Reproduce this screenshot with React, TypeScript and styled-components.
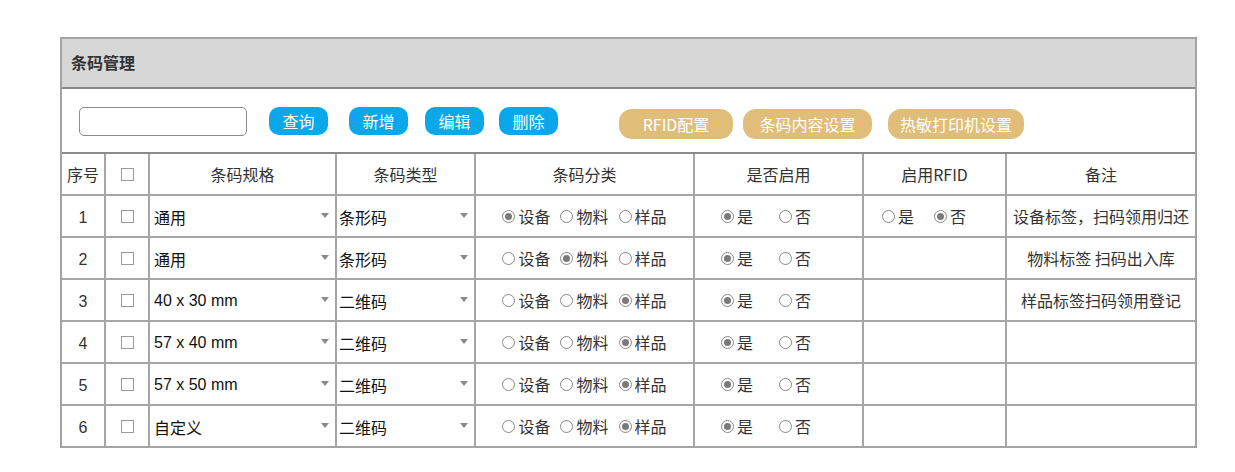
import React from 'react';
import styled, { createGlobalStyle } from 'styled-components';

const GlobalStyle = createGlobalStyle`
  body {
    margin: 0;
    background: #fff;
    color: #333;
    font-family: "Noto Sans CJK SC", "Microsoft YaHei", sans-serif;
  }
`;

const Page = styled.div`
  padding: 37px 0 0 60px;
`;

const Panel = styled.div`
  width: 1137px;
  box-sizing: border-box;
  border: 2px solid #a3a3a3;
`;

const TitleBar = styled.div`
  height: 45px;
  display: flex;
  align-items: center;
  padding: 0 0 3px 9px;
  box-sizing: content-box;
  background: #d7d7d7;
  border-bottom: 2px solid #8a8a8a;
  font-size: 16px;
  line-height: 1;
  font-weight: bold;
  color: #333;
`;

const Toolbar = styled.div`
  height: 65px;
  display: flex;
  align-items: flex-start;
  padding: 18px 0 0 17px;
  box-sizing: border-box;
  border-bottom: 2px solid #8a8a8a;
`;

const SearchInput = styled.input`
  width: 168px;
  height: 29px;
  box-sizing: border-box;
  border: 1px solid #8c8c8c;
  border-radius: 5px;
  outline: none;
`;

const ActionButton = styled.button<{ $tone: 'blue' | 'gold'; $w: number; $ml: number }>`
  width: ${(p) => p.$w}px;
  height: ${(p) => (p.$tone === 'blue' ? 28 : 30)}px;
  margin-left: ${(p) => p.$ml}px;
  margin-top: ${(p) => (p.$tone === 'blue' ? 0 : 2)}px;
  padding: 0;
  border: none;
  border-radius: ${(p) => (p.$tone === 'blue' ? 10 : 13)}px;
  background: ${(p) => (p.$tone === 'blue' ? '#0aa7ea' : '#e0bd78')};
  color: #fff;
  font-family: "Noto Sans CJK SC", sans-serif;
  font-size: 16px;
  line-height: 1;
  cursor: pointer;
`;

const Grid = styled.table`
  width: 100%;
  table-layout: fixed;
  border-collapse: collapse;
  font-size: 16px;
  color: #333;

  th,
  td {
    height: 40px;
    padding: 0;
    border: 2px solid #a6a6a6;
    text-align: center;
    vertical-align: middle;
  }
  tr:first-child th {
    border-top: none;
  }
  tr:last-child td {
    border-bottom: none;
  }
  th:first-child,
  td:first-child {
    border-left: none;
  }
  th:last-child,
  td:last-child {
    border-right: none;
  }
  th {
    font-weight: normal;
  }
`;

const NumCell = styled.td`
  font-family: "Liberation Sans", Arial, sans-serif;
`;

const NumText = styled.span`
  position: relative;
  top: 2px;
`;

const Check = styled.span`
  display: inline-block;
  width: 13px;
  height: 13px;
  box-sizing: border-box;
  border: 1px solid #9a9a9a;
  background: #fff;
  vertical-align: middle;
  margin-top: -4px;
`;

const SelectBox = styled.div<{ $pl: number }>`
  display: flex;
  align-items: center;
  justify-content: space-between;
  padding: 1px 6px 0 ${(p) => p.$pl}px;
  font-family: "Liberation Sans", "Noto Sans CJK SC", sans-serif;
  color: #111;
  text-align: left;
`;

const Caret = styled.span`
  width: 0;
  height: 0;
  margin-top: -2px;
  border-left: 4.5px solid transparent;
  border-right: 4.5px solid transparent;
  border-top: 5px solid #8a8a8a;
`;

const RadioGroup = styled.div<{ $center?: boolean; $pl?: number; $gap: number }>`
  display: flex;
  align-items: center;
  justify-content: ${(p) => (p.$center ? 'center' : 'flex-start')};
  padding-left: ${(p) => p.$pl ?? 0}px;
  gap: ${(p) => p.$gap}px;
`;

const RadioItem = styled.label`
  display: flex;
  align-items: center;
  gap: 3px;
  line-height: 1;
`;

const Dot = styled.span<{ $on: boolean }>`
  position: relative;
  width: 13px;
  height: 13px;
  box-sizing: border-box;
  border: 1px solid #8a8a8a;
  border-radius: 50%;
  background: #fff;

  &::after {
    content: '';
    display: ${(p) => (p.$on ? 'block' : 'none')};
    position: absolute;
    left: 2px;
    top: 2px;
    width: 7px;
    height: 7px;
    border-radius: 50%;
    background: #7a7a7a;
  }
`;

const Note = styled.td`
  padding: 0 4px;
  white-space: nowrap;
`;

type Row = {
  spec: string;
  kind: string;
  cat: number;
  rfid?: boolean;
  note?: string;
};

const rows: Row[] = [
  { spec: '通用', kind: '条形码', cat: 0, rfid: false, note: '设备标签，扫码领用归还' },
  { spec: '通用', kind: '条形码', cat: 1, note: '物料标签 扫码出入库' },
  { spec: '40 x 30 mm', kind: '二维码', cat: 2, note: '样品标签扫码领用登记' },
  { spec: '57 x 40 mm', kind: '二维码', cat: 2 },
  { spec: '57 x 50 mm', kind: '二维码', cat: 2 },
  { spec: '自定义', kind: '二维码', cat: 2 },
];

const colWidths = [43, 44, 187, 139, 219, 169, 143, 189];
const headers = ['序号', '', '条码规格', '条码类型', '条码分类', '是否启用', '启用RFID', '备注'];

const Radio = ({ on, label }: { on: boolean; label: string }) => (
  <RadioItem>
    <Dot $on={on} />
    {label}
  </RadioItem>
);

const Select = ({ value, pl }: { value: string; pl: number }) => (
  <SelectBox $pl={pl}>
    <span>{value}</span>
    <Caret />
  </SelectBox>
);

const App = () => {
  return (
    <Page>
      <GlobalStyle />
      <Panel>
        <TitleBar>条码管理</TitleBar>
        <Toolbar>
          <SearchInput />
          <ActionButton $tone="blue" $w={59} $ml={22}>查询</ActionButton>
          <ActionButton $tone="blue" $w={59} $ml={21}>新增</ActionButton>
          <ActionButton $tone="blue" $w={59} $ml={17}>编辑</ActionButton>
          <ActionButton $tone="blue" $w={59} $ml={15}>删除</ActionButton>
          <ActionButton $tone="gold" $w={114} $ml={61}>RFID配置</ActionButton>
          <ActionButton $tone="gold" $w={129} $ml={10}>条码内容设置</ActionButton>
          <ActionButton $tone="gold" $w={136} $ml={16}>热敏打印机设置</ActionButton>
        </Toolbar>
        <Grid>
          <colgroup>
            {colWidths.map((w, i) => (
              <col key={i} style={{ width: w }} />
            ))}
          </colgroup>
          <thead>
            <tr>
              {headers.map((h, i) => (
                <th key={i}>{i === 1 ? <Check /> : h}</th>
              ))}
            </tr>
          </thead>
          <tbody>
            {rows.map((r, i) => (
              <tr key={i}>
                <NumCell>
                  <NumText>{i + 1}</NumText>
                </NumCell>
                <td>
                  <Check />
                </td>
                <td>
                  <Select value={r.spec} pl={4} />
                </td>
                <td>
                  <Select value={r.kind} pl={2} />
                </td>
                <td>
                  <RadioGroup $center $gap={10}>
                    <Radio on={r.cat === 0} label="设备" />
                    <Radio on={r.cat === 1} label="物料" />
                    <Radio on={r.cat === 2} label="样品" />
                  </RadioGroup>
                </td>
                <td>
                  <RadioGroup $pl={26} $gap={26}>
                    <Radio on label="是" />
                    <Radio on={false} label="否" />
                  </RadioGroup>
                </td>
                <td>
                  {r.rfid !== undefined && (
                    <RadioGroup $pl={18} $gap={20}>
                      <Radio on={r.rfid} label="是" />
                      <Radio on={!r.rfid} label="否" />
                    </RadioGroup>
                  )}
                </td>
                <Note>{r.note}</Note>
              </tr>
            ))}
          </tbody>
        </Grid>
      </Panel>
    </Page>
  );
};

export default App;
